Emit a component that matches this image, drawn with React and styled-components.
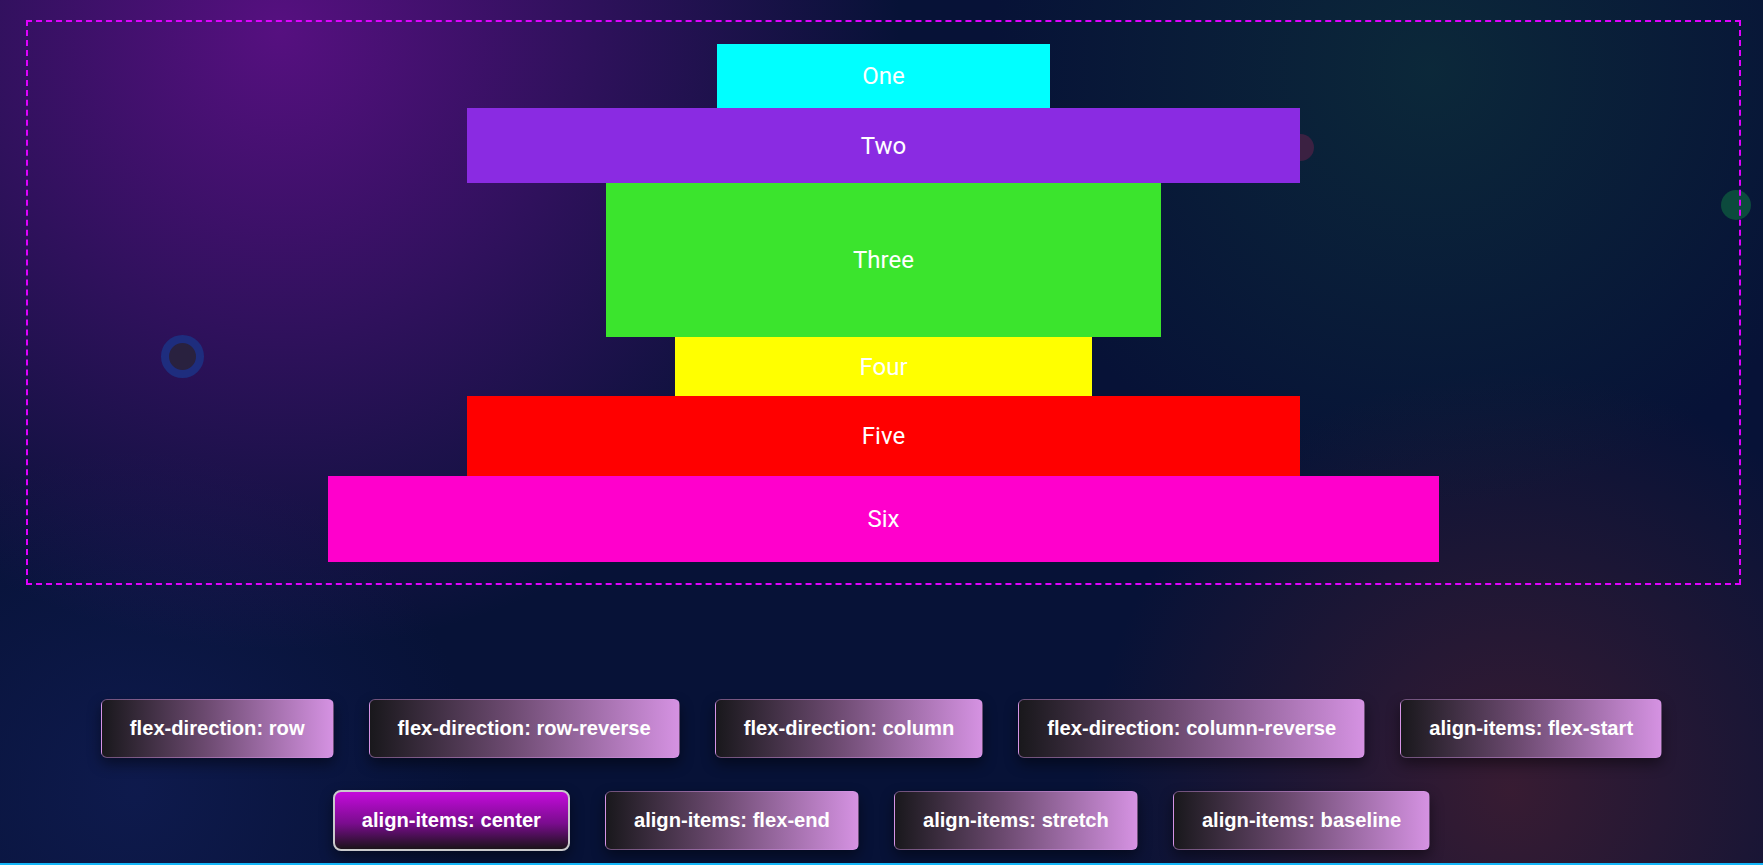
import styled, { createGlobalStyle } from "styled-components";

const GlobalStyle = createGlobalStyle`
  html, body {
    margin: 0;
    padding: 0;
    background: #08113a;
  }
  * {
    box-sizing: border-box;
  }
`;

const Page = styled.div`
  position: relative;
  min-height: 100vh;
  overflow: hidden;
  display: flex;
  flex-direction: column;
  background:
    radial-gradient(circle 620px at 280px 30px, rgba(86, 16, 128, 1) 0%, rgba(86, 16, 128, 0) 100%),
    radial-gradient(circle 440px at 1430px 70px, rgba(12, 44, 58, 0.85) 0%, rgba(12, 44, 58, 0) 100%),
    radial-gradient(circle 420px at 1510px 790px, rgba(58, 28, 50, 0.95) 0%, rgba(58, 28, 50, 0) 100%),
    radial-gradient(circle 340px at 135px 790px, rgba(16, 28, 82, 0.8) 0%, rgba(16, 28, 82, 0) 100%),
    #071237;
`;

const Dot = styled.span`
  position: absolute;
  left: ${(p) => p.$x - p.$size / 2}px;
  top: ${(p) => p.$y - p.$size / 2}px;
  width: ${(p) => p.$size}px;
  height: ${(p) => p.$size}px;
  border-radius: 50%;
  background: ${(p) => p.$color};
  border: ${(p) => (p.$ring ? `${p.$ring}px solid #1e2d7e` : "none")};
  z-index: 0;
`;

const Stage = styled.div`
  position: relative;
  z-index: 1;
  margin: 20px 22px 0 26px;
  padding: 22px 0 21px;
  border: 2px dashed #e000ff;
  display: flex;
  flex-direction: column;
  align-items: center;
`;

const Item = styled.div`
  width: ${(p) => p.$w}px;
  height: ${(p) => p.$h}px;
  background: ${(p) => p.$bg};
  color: #fff;
  font-family: Roboto, "Noto Sans", sans-serif;
  font-size: 24px;
  display: flex;
  align-items: center;
  justify-content: center;
`;

const Controls = styled.div`
  position: relative;
  z-index: 1;
  margin-top: 114px;
  padding-bottom: 11px;
  display: flex;
  flex-wrap: wrap;
  justify-content: center;
  align-items: center;
  gap: 32px 35px;
`;

const Button = styled.button`
  font-family: "Liberation Sans", Arial, sans-serif;
  font-weight: bold;
  font-size: 20.17px;
  line-height: 23px;
  color: #fff;
  padding: ${(p) => (p.$active ? "17px 27px" : "17px 28px")};
  cursor: pointer;
  border-radius: ${(p) => (p.$active ? "8px" : "6px")};
  border: ${(p) =>
    p.$active ? "2px solid #c9c9cc" : "1px solid rgba(214, 150, 236, 0.45)"};
  background: ${(p) =>
    p.$active
      ? "linear-gradient(to bottom, #c40bdb 0%, #7a0c8e 55%, #1a1219 100%)"
      : "linear-gradient(to right, #19181c 0%, #6c4a70 45%, #d592e2 100%)"};
  box-shadow: 0 6px 14px rgba(0, 0, 0, 0.45);
`;

const BottomBar = styled.div`
  margin-top: auto;
  height: 2px;
  background: #14b6f8;
  position: relative;
  z-index: 1;
`;

const items = [
  { label: "One", bg: "#00ffff", w: 333, h: 64 },
  { label: "Two", bg: "#8a2be2", w: 833, h: 75 },
  { label: "Three", bg: "#3be42d", w: 555, h: 154 },
  { label: "Four", bg: "#ffff00", w: 417, h: 59 },
  { label: "Five", bg: "#ff0000", w: 833, h: 80 },
  { label: "Six", bg: "#ff00cc", w: 1111, h: 86 },
];

const options = [
  "flex-direction: row",
  "flex-direction: row-reverse",
  "flex-direction: column",
  "flex-direction: column-reverse",
  "align-items: flex-start",
  "align-items: center",
  "align-items: flex-end",
  "align-items: stretch",
  "align-items: baseline",
];

export default function App() {
  return (
    <Page>
      <GlobalStyle />
      <Dot $x={182} $y={356} $size={43} $ring={8} $color="#29213f" />
      <Dot $x={1300} $y={147} $size={27} $color="#3b2142" />
      <Dot $x={1736} $y={205} $size={30} $color="#0c4a3d" />

      <Stage>
        {items.map((it) => (
          <Item key={it.label} $bg={it.bg} $w={it.w} $h={it.h}>
            {it.label}
          </Item>
        ))}
      </Stage>

      <Controls>
        {options.map((o) => (
          <Button key={o} $active={o === "align-items: center"}>
            {o}
          </Button>
        ))}
      </Controls>

      <BottomBar />
    </Page>
  );
}
